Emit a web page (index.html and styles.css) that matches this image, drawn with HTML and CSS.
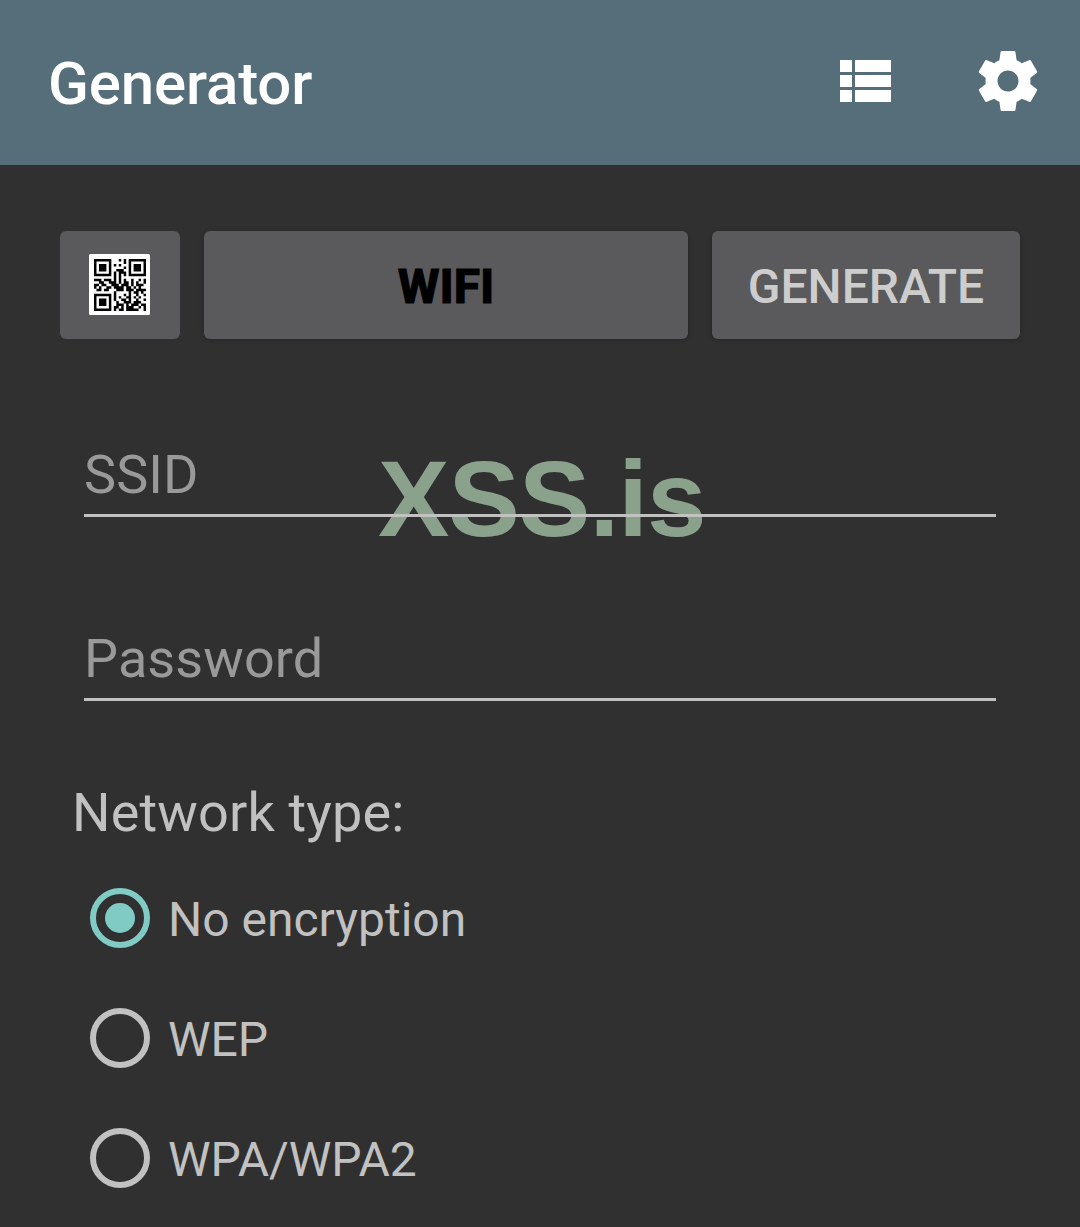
FILE: index.html
```
<!DOCTYPE html>
<html lang="en">
<head>
  <meta charset="UTF-8" />
  <meta name="viewport" content="width=device-width, initial-scale=1" />
  <title>Generator</title>
  <link rel="stylesheet" href="styles.css">
</head>
<body>

  <header class="app-bar">
    <h1>Generator</h1>
    <svg class="icon" viewBox="0 0 24 24">
      <path d="M4 14h4v-4H4v4zm0 5h4v-4H4v4zM4 9h4V5H4v4zm5 5h12v-4H9v4zm0 5h12v-4H9v4zM9 5v4h12V5H9z"/>
    </svg>
    <svg class="icon" viewBox="0 0 24 24">
      <path d="M19.43 12.98c.04-.32.07-.64.07-.98s-.03-.66-.07-.98l2.11-1.65c.19-.15.24-.42.12-.64l-2-3.46c-.12-.22-.39-.3-.61-.22l-2.49 1c-.52-.4-1.08-.73-1.69-.98l-.38-2.65C14.46 2.18 14.25 2 14 2h-4c-.25 0-.46.18-.49.42l-.38 2.65c-.61.25-1.17.59-1.69.98l-2.49-1c-.23-.09-.49 0-.61.22l-2 3.46c-.13.22-.07.49.12.64l2.11 1.65c-.04.32-.07.65-.07.98s.03.66.07.98l-2.11 1.65c-.19.15-.24.42-.12.64l2 3.46c.12.22.39.3.61.22l2.49-1c.52.4 1.08.73 1.69.98l.38 2.65c.03.24.24.42.49.42h4c.25 0 .46-.18.49-.42l.38-2.65c.61-.25 1.17-.59 1.69-.98l2.49 1c.23.09.49 0 .61-.22l2-3.46c.12-.22.07-.49-.12-.64l-2.11-1.65zM12 15.5c-1.93 0-3.5-1.57-3.5-3.5s1.57-3.5 3.5-3.5 3.5 1.57 3.5 3.5-1.57 3.5-3.5 3.5z"/>
    </svg>
  </header>

  <form class="generator" onsubmit="return false;">
    <div class="buttons">
      <button type="button" class="btn btn-qr" aria-label="QR code">
        <svg class="qr" viewBox="0 0 61 61">
          <rect width="61" height="61" rx="1.5" fill="#fff"/>
          <g transform="translate(5 5) scale(2.476)" fill="none" stroke="#000">
            <!-- finder squares -->
            <path d="M.5 .5h6v6h-6zM14.5 .5h6v6h-6zM.5 14.5h6v6h-6z"/>
            <path stroke-width="3" d="M2 3.5h3M16 3.5h3M2 17.5h3"/>
            <!-- data rows -->
            <path d="M10 .5h1M12 .5h1M12 1.5h1M8 2.5h1M10 2.5h1M12 3.5h1M9 4.5h3M8 5.5h1M10 5.5h3M8 6.5h1M10 6.5h1M12 6.5h1M8 7.5h1M10 7.5h1
              M0 8.5h3M4 8.5h3M8 8.5h1M10 8.5h1M12 8.5h1M15 8.5h1M18 8.5h1M20 8.5h1
              M2 9.5h2M6 9.5h3M10 9.5h1M12 9.5h2M15 9.5h1M17 9.5h1M20 9.5h1
              M0 10.5h2M3 10.5h2M7 10.5h3M11 10.5h3M15 10.5h1M17 10.5h3
              M0 11.5h1M2 11.5h1M5 11.5h2M8 11.5h4M13 11.5h2M16 11.5h1M18 11.5h1
              M1 12.5h2M4 12.5h2M9 12.5h3M13 12.5h3M17 12.5h4
              M8 13.5h1M14 13.5h1M16 13.5h2M19 13.5h1
              M8 14.5h1M12 14.5h1M14 14.5h1M17 14.5h1M20 14.5h1
              M8 15.5h1M10 15.5h1M13 15.5h2M16 15.5h1M18 15.5h1
              M8 16.5h1M11 16.5h2M14 16.5h1M17 16.5h1M20 16.5h1
              M9 17.5h1M12 17.5h3M16 17.5h3
              M9 18.5h3M13 18.5h1M15 18.5h3M19 18.5h2
              M8 19.5h2M11 19.5h1M13 19.5h3M18 19.5h1M20 19.5h1
              M8 20.5h1M10 20.5h2M13 20.5h5M20 20.5h1"/>
          </g>
        </svg>
      </button>
      <button type="button" class="btn btn-type">WIFI</button>
      <button type="submit" class="btn btn-generate">GENERATE</button>
    </div>

    <div class="fields">
      <span class="watermark">XSS.is</span>
      <input type="text" name="ssid" placeholder="SSID" />
      <input type="text" name="password" placeholder="Password" />
    </div>

    <h2>Network type:</h2>
    <label class="option"><input type="radio" name="network" checked /><span>No encryption</span></label>
    <label class="option"><input type="radio" name="network" /><span>WEP</span></label>
    <label class="option"><input type="radio" name="network" /><span>WPA/WPA2</span></label>
  </form>

</body>
</html>
```
FILE: styles.css
```
* {
  box-sizing: border-box;
}
body {
  margin: 0;
  background: #303030;
  color: #c1c1c1;
  font-family: Roboto, sans-serif;
}
.app-bar {
  display: flex;
  align-items: center;
  height: 165px;
  padding: 0 36px 3px 48px;
  background: #566e79;
  color: #fff;
}
.app-bar h1 {
  flex: 1;
  margin: 0;
  padding-top: 4px;
  font-size: 60px;
  font-weight: 500;
  letter-spacing: -0.15px;
}
.icon {
  width: 72px;
  height: 72px;
  margin-left: 72px;
  fill: #fff;
}
.generator {
  padding: 66px 60px 0;
}
.buttons {
  display: flex;
  gap: 24px;
}
.btn {
  height: 108px;
  padding: 3px 0 0;
  border: 0;
  border-radius: 6px;
  background: #5a5a5c;
  box-shadow: 0 1px 4px rgba(0, 0, 0, 0.25);
  color: #cdcdcd;
  font-family: inherit;
  font-size: 48px;
  font-weight: 500;
}
.btn-qr {
  width: 120px;
  padding: 0;
  box-shadow: none;
}
.qr {
  display: block;
  width: 61px;
  height: 61px;
  margin: 0 auto 2px 29px;
}
.btn-type {
  flex: 1;
  color: #000;
  font-weight: 800;
  -webkit-text-stroke: 0.8px #000;
}
.btn-generate {
  width: 308px;
}
.fields {
  position: relative;
  display: grid;
  gap: 101px;
  margin: 95px 24px 0;
}
.fields input {
  position: relative;
  width: 100%;
  height: 83px;
  padding: 0;
  border: 0;
  border-bottom: 3px solid #c1c1c1;
  background: none;
  color: #c1c1c1;
  font-family: inherit;
  font-size: 54px;
  letter-spacing: 0.1px;
  outline: none;
}
.fields input::placeholder {
  color: #989998;
  opacity: 1;
}
/* sits behind the underline of the first field */
.watermark {
  position: absolute;
  top: 5px;
  left: 294px;
  color: #8aa18c;
  font: bold 107px/120px "Liberation Sans", Arial, sans-serif;
  letter-spacing: -0.9px;
}
h2 {
  margin: 76px 0 9px 12px;
  font-size: 54px;
  font-weight: 400;
  line-height: 72px;
  letter-spacing: 0.15px;
}
.option {
  display: flex;
  align-items: center;
  gap: 18px;
  height: 120px;
  padding-left: 30px;
  font-size: 48px;
}
.option span {
  padding-top: 3px;
}
.option input {
  display: grid;
  place-items: center;
  width: 60px;
  height: 60px;
  margin: 0;
  border: 6px solid #c1c1c1;
  border-radius: 50%;
  appearance: none;
}
.option input:checked {
  border-color: #80cbc4;
}
.option input:checked::before {
  content: "";
  width: 30px;
  height: 30px;
  border-radius: 50%;
  background: #80cbc4;
}
```
